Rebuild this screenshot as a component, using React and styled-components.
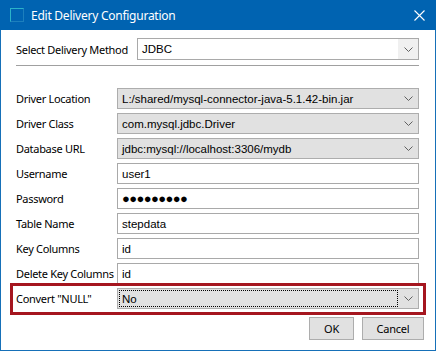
import React from 'react'
import styled, { createGlobalStyle } from 'styled-components'

const GlobalStyle = createGlobalStyle`
  html, body {
    margin: 0;
    padding: 0;
    background: #fff;
  }
  body {
    font-family: 'Noto Sans', 'Open Sans', sans-serif;
    font-size: 12px;
    color: #000;
  }
`

const Window = styled.div`
  width: 436px;
  height: 351px;
  box-sizing: border-box;
  display: flex;
  flex-direction: column;
  background: #fff;
  border: 1px solid #1670b8;
  border-top: none;
`

const TitleBar = styled.div`
  height: 30px;
  flex: none;
  display: flex;
  align-items: center;
  background: #0063b1;
  color: #fff;
  margin: 0 -1px;
  padding-left: 10px;
`

const AppIcon = styled.span`
  width: 12px;
  height: 12px;
  border: 1px solid #2bb3c9;
  border-right-color: #1d7fbd;
  border-bottom-color: #1d7fbd;
`

const Title = styled.span`
  margin-left: 7px;
  font-size: 12px;
  letter-spacing: -0.25px;
`

const CloseButton = styled.span`
  margin-left: auto;
  margin-right: 11px;
  display: flex;
`

const Body = styled.div`
  flex: 1;
  display: flex;
  flex-direction: column;
  padding: 8px 16px 0 15px;
`

const Row = styled.div`
  display: grid;
  grid-template-columns: ${({ labelWidth }) => labelWidth}px 1fr;
  align-items: center;
  height: ${({ h }) => h || 21}px;
`

const Label = styled.span`
  font-size: 11px;
  letter-spacing: -0.3px;
  white-space: nowrap;
`

const Separator = styled.div`
  height: 1px;
  background: #a0a0a0;
  border-bottom: 1px solid #fff;
  margin: 5px 0 21px;
`

const Fields = styled.div`
  display: flex;
  flex-direction: column;
  gap: 4px;
`

const Box = styled.div`
  height: 100%;
  box-sizing: border-box;
  display: flex;
  align-items: center;
  border: 1px solid ${({ disabled }) => (disabled ? '#adadad' : '#a9a9a9')};
  background: ${({ disabled }) => (disabled ? '#e1e1e1' : '#fff')};
  font-family: 'Liberation Sans', Arial, sans-serif;
  font-size: 11.5px;
  overflow: hidden;
  white-space: nowrap;
`

const BoxText = styled.span`
  flex: 1;
  padding-left: 4px;
  align-self: stretch;
  display: flex;
  align-items: center;
  background: ${({ white }) => (white ? '#fff' : 'transparent')};
`

const Focus = styled.span`
  flex: 1;
  align-self: stretch;
  margin: 1px 0 1px 1px;
  padding-left: 2px;
  display: flex;
  align-items: center;
  border: 1px dotted #000;
`

const ArrowButton = styled.span`
  width: 20px;
  align-self: stretch;
  display: flex;
  align-items: center;
  justify-content: center;
  background: ${({ shaded }) => (shaded ? '#f0f0f0' : 'transparent')};
`

const Dots = styled.span`
  font-size: 13px;
  letter-spacing: -0.6px;
`

const Highlight = styled.div`
  margin: -5px -7px 0 -6px;
  padding: 2px 4px 3px 3px;
  border: 3px solid #a5161f;
`

const ButtonRow = styled.div`
  display: flex;
  justify-content: flex-end;
  gap: 8px;
  margin: 2px -5px 0 0;
`

const Button = styled.button`
  width: ${({ w }) => w}px;
  height: 23px;
  box-sizing: border-box;
  border: 1px solid #adadad;
  background: #e1e1e1;
  font-family: 'Noto Sans', 'Open Sans', sans-serif;
  font-size: 11px;
  letter-spacing: -0.2px;
  color: #000;
  padding: 0;
`

const Chevron = () => (
  <svg width="9" height="5" viewBox="0 0 9 5">
    <path d="M0.5 0.5 L4.5 4.5 L8.5 0.5" fill="none" stroke="#606060" strokeWidth="1" />
  </svg>
)

const Combo = ({ value, disabled, editable, focused }) => (
  <Box disabled={disabled}>
    {focused ? <Focus>{value}</Focus> : <BoxText white={editable}>{value}</BoxText>}
    <ArrowButton shaded={editable}>
      <Chevron />
    </ArrowButton>
  </Box>
)

const Input = ({ children }) => (
  <Box>
    <BoxText>{children}</BoxText>
  </Box>
)

export default function App() {
  return (
    <>
      <GlobalStyle />
      <Window>
        <TitleBar>
          <AppIcon />
          <Title>Edit Delivery Configuration</Title>
          <CloseButton>
            <svg width="11" height="11" viewBox="0 0 11 11">
              <path d="M0.5 0.5 L10.5 10.5 M10.5 0.5 L0.5 10.5" stroke="#fff" strokeWidth="1.1" />
            </svg>
          </CloseButton>
        </TitleBar>
        <Body>
          <Row labelWidth={121} h={22}>
            <Label>Select Delivery Method</Label>
            <Combo value="JDBC" editable />
          </Row>
          <Separator />
          <Fields>
            <Row labelWidth={101}>
              <Label>Driver Location</Label>
              <Combo value="L:/shared/mysql-connector-java-5.1.42-bin.jar" disabled />
            </Row>
            <Row labelWidth={101}>
              <Label>Driver Class</Label>
              <Combo value="com.mysql.jdbc.Driver" disabled />
            </Row>
            <Row labelWidth={101}>
              <Label>Database URL</Label>
              <Combo value="jdbc:mysql://localhost:3306/mydb" disabled />
            </Row>
            <Row labelWidth={101}>
              <Label>Username</Label>
              <Input>user1</Input>
            </Row>
            <Row labelWidth={101}>
              <Label>Password</Label>
              <Input>
                <Dots>●●●●●●●●●</Dots>
              </Input>
            </Row>
            <Row labelWidth={101}>
              <Label>Table Name</Label>
              <Input>stepdata</Input>
            </Row>
            <Row labelWidth={101}>
              <Label>Key Columns</Label>
              <Input>id</Input>
            </Row>
            <Row labelWidth={101}>
              <Label>Delete Key Columns</Label>
              <Input>id</Input>
            </Row>
            <Highlight>
              <Row labelWidth={101}>
                <Label>Convert "NULL"</Label>
                <Combo value="No" disabled focused />
              </Row>
            </Highlight>
          </Fields>
          <ButtonRow>
            <Button w={45}>OK</Button>
            <Button w={62}>Cancel</Button>
          </ButtonRow>
        </Body>
      </Window>
    </>
  )
}
